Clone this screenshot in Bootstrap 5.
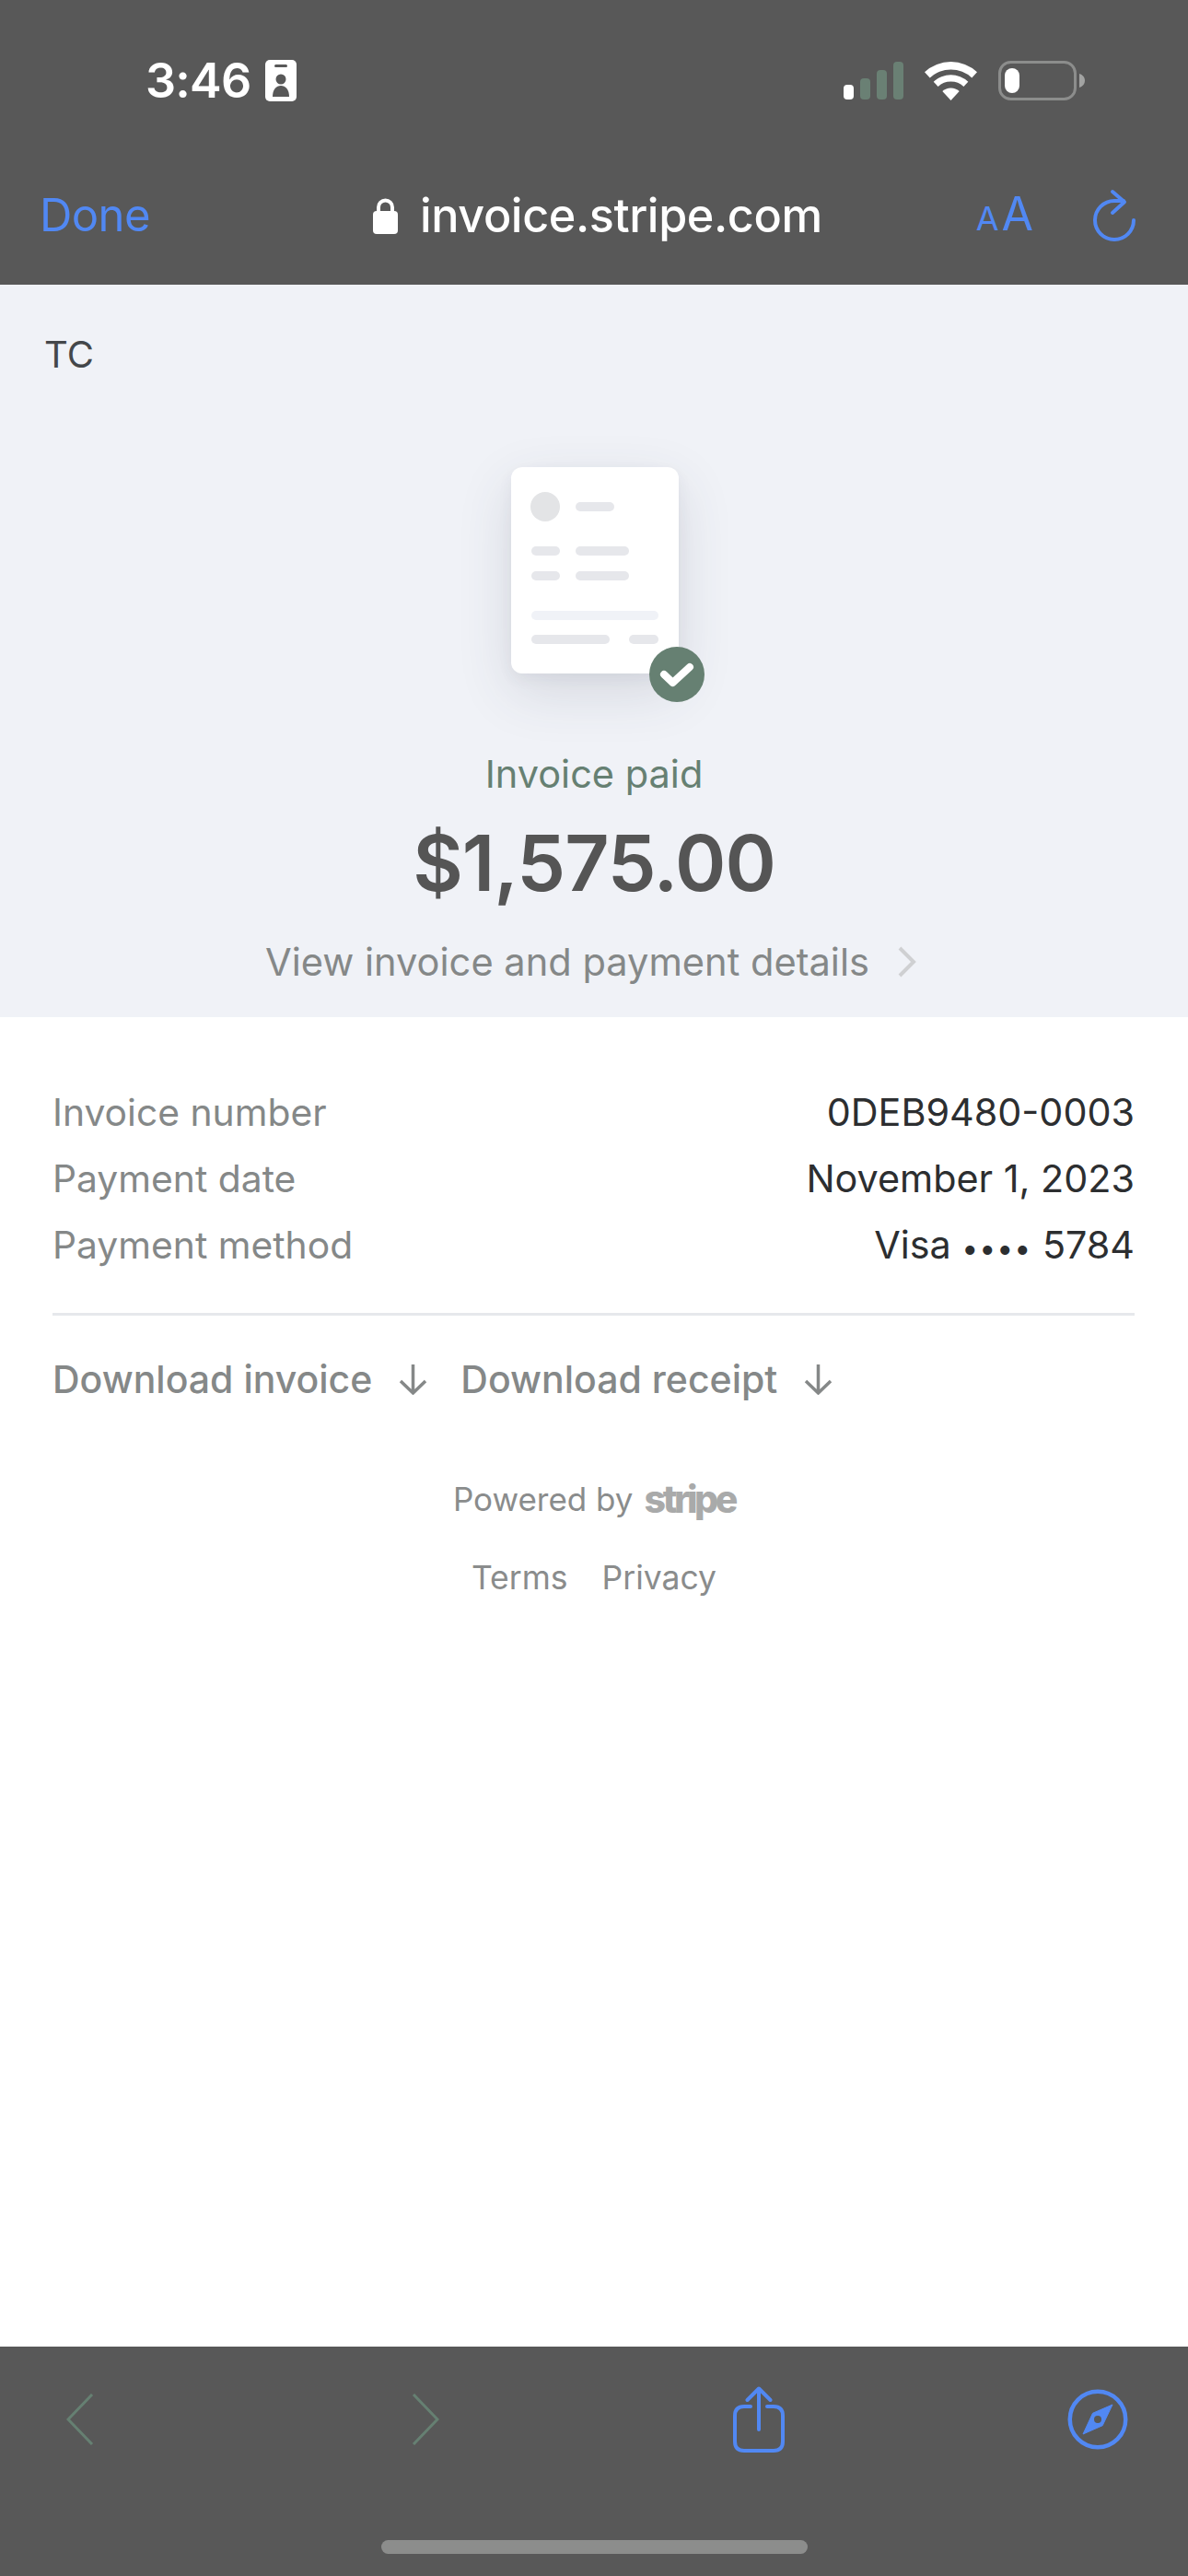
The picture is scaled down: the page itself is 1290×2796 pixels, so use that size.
<!DOCTYPE html>
<html lang="en">
<head>
    <meta charset="UTF-8">
    <title>Invoice paid</title>
    <link href="https://cdn.jsdelivr.net/npm/bootstrap@5.3.0/dist/css/bootstrap.min.css" rel="stylesheet">
    <style>
        html, body { height: 2796px; }
        body { font-family: Inter, "Liberation Sans", sans-serif; background: #fff; overflow: hidden; }
        .phone-page { height: 2796px; }
        .top-bar { height: 309px; background: #585858; color: #fff; }
        .status-row { box-sizing: content-box; height: 45px; padding: 65px 112px 0 158px; }
        .clock { font-size: 52px; line-height: 45px; font-weight: 600; letter-spacing: -.8px; }
        .status-icons { gap: 23px; }
        .url-row { height: 56px; margin-top: 96px; padding: 0 56px 0 43px; }
        .done-link { width: 362px; color: #5188f3; font-size: 49px; line-height: 56px; text-decoration: none; letter-spacing: -.6px; }
        .url-text { font-size: 50.3px; line-height: 56px; font-weight: 500; letter-spacing: -.4px; }
        .aa-mark { color: #5188f3; line-height: 56px; margin: 8px 64px 0 0; }
        .aa-small { font-size: 36px; margin-right: 3px; }
        .aa-big { font-size: 50px; }
        .hero-block { height: 795px; background: #f0f2f7; }
        .tc-label { padding: 52px 0 0 48px; font-size: 40px; line-height: 48px; color: #44474a; }
        .doc-wrap { width: 182px; height: 224px; margin: 98px auto 0; transform: translateX(1px); }
        .doc-sheet { width: 182px; height: 224px; background: #fff; border-radius: 12px; box-shadow: 0 20px 60px rgba(60, 66, 87, .14), 0 6px 16px rgba(60, 66, 87, .06); }
        .doc-check { right: -28px; bottom: -31px; width: 60px; height: 60px; }
        .paid-label { margin-top: 84px; color: #668072; font-size: 41.5px; line-height: 50px; }
        .amount-label { margin-top: 22px; color: #555; font-size: 84px; line-height: 100px; font-weight: 600; letter-spacing: -1px; }
        .details-row { margin-top: 32px; gap: 30px; padding-right: 6px; }
        .details-link { color: #858888; font-size: 41.6px; line-height: 50px; text-decoration: none; }
        .info-block { padding: 67px 58px 0 57px; font-size: 40.8px; line-height: 72px; }
        .info-key { color: #858888; }
        .info-val { color: #2c2e30; font-size: 41.3px; }
        .pin-dots { font-size: 32px; letter-spacing: 1px; }
        .rule-line { height: 3px; background: #e6e8ec; margin-top: 34px; }
        .dl-row { margin-top: 33px; line-height: 72px; font-size: 41px; font-weight: 500; gap: 35px; }
        .dl-link { color: #858888; text-decoration: none; gap: 28px; }
        .foot-block { margin-top: 68px; color: #8a8c8c; font-size: 35px; }
        .foot-brand { gap: 12px; }
        .stripe-word { color: #a9aaaa; font-size: 41px; line-height: 50px; font-weight: 800; letter-spacing: -3.4px; }
        .legal-row { margin-top: 34px; gap: 37px; line-height: 50px; font-size: 35.5px; }
        .legal-row a { color: #8a8c8c; text-decoration: none; }
        .bottom-bar { height: 249px; background: #585858; }
        .tool-row { height: 72px; margin-top: 43px; padding: 0 65px 0 72px; }
        .fwd-icon { margin-left: 345px; }
        .share-icon { margin-left: 319px; }
        .home-pill { width: 463px; height: 15px; background: #8c8d8c; border-radius: 8px; margin: 95px auto 0; }
    </style>
</head>
<body>
<div class="phone-page d-flex flex-column">

    <header class="top-bar">
        <div class="status-row d-flex align-items-center">
            <span class="clock">3:46</span>
            <svg class="ms-3" width="34" height="45" viewBox="0 0 34 45">
                <rect width="34" height="45" rx="5" fill="#fff"/>
                <rect x="10" y="5" width="14" height="3" rx="1.5" fill="#585858"/>
                <circle cx="17" cy="21" r="5.500" fill="#585858"/>
                <path d="M8 40c0-8 4-12 9-12s9 4 9 12z" fill="#585858"/>
            </svg>
            <div class="status-icons d-flex align-items-center ms-auto">
                <svg width="65" height="41" viewBox="0 0 65 41">
                    <rect x="0" y="25" width="11" height="16" rx="4" fill="#fff"/>
                    <rect x="18" y="18" width="11" height="23" rx="4" fill="#6a8074"/>
                    <rect x="36" y="9" width="11" height="32" rx="4" fill="#6a8074"/>
                    <rect x="54" y="0" width="11" height="41" rx="4" fill="#6a8074"/>
                </svg>
                <svg width="57" height="42" viewBox="0 0 57 42">
                    <path d="M0 11.200A42 42 0 0 1 57 11.200L51.300 17.400A33.500 33.500 0 0 0 5.700 17.400Z" fill="#fff"/>
                    <path d="M9.700 21.700A27.700 27.700 0 0 1 47.300 21.700L42.400 27A20.500 20.500 0 0 0 14.600 27Z" fill="#fff"/>
                    <path d="M19.300 32.100A13.500 13.500 0 0 1 37.700 32.100L28.500 42Z" fill="#fff"/>
                </svg>
                <svg width="94" height="43" viewBox="0 0 94 43">
                    <rect x="1.500" y="1.500" width="82" height="40" rx="12" fill="none" stroke="#8c8d8c" stroke-width="3"/>
                    <rect x="7" y="8" width="16" height="27" rx="8" fill="#fff"/>
                    <path d="M88 14c3.500 1 6 4 6 7.500s-2.500 6.500-6 7.500z" fill="#a2a3a2"/>
                </svg>
            </div>
        </div>
        <div class="url-row d-flex align-items-center">
            <a class="done-link" href="#">Done</a>
            <svg class="me-4" width="27" height="40" viewBox="0 0 27 40">
                <path d="M6 17v-6a7.500 7.500 0 0 1 15 0v6" fill="none" stroke="#fff" stroke-width="4"/>
                <rect x="0" y="15" width="27" height="25" rx="4" fill="#fff"/>
            </svg>
            <span class="url-text">invoice.stripe.com</span>
            <span class="aa-mark ms-auto"><span class="aa-small">A</span><span class="aa-big">A</span></span>
            <svg width="48" height="58" viewBox="0 0 48 58">
                <path d="M45 34A21 21 0 1 1 24 13H34" fill="none" stroke="#5188f3" stroke-width="4" stroke-linecap="round"/>
                <path d="M22 3L35 14.300 22 26" fill="none" stroke="#5188f3" stroke-width="4" stroke-linecap="round" stroke-linejoin="round"/>
            </svg>
        </div>
    </header>

    <section class="hero-block">
        <div class="tc-label">TC</div>
        <div class="doc-wrap position-relative">
            <div class="doc-sheet">
                <svg width="182" height="224" viewBox="0 0 182 224">
                    <circle cx="37" cy="43" r="16" fill="#e3e4e6"/>
                    <rect x="70" y="38" width="42" height="10" rx="5" fill="#e6e7eb"/>
                    <rect x="22" y="86" width="31" height="10" rx="5" fill="#e6e7eb"/>
                    <rect x="70" y="86" width="58" height="10" rx="5" fill="#e6e7eb"/>
                    <rect x="22" y="113" width="31" height="10" rx="5" fill="#e6e7eb"/>
                    <rect x="70" y="113" width="58" height="10" rx="5" fill="#e6e7eb"/>
                    <rect x="22" y="156" width="138" height="10" rx="5" fill="#f0f2f7"/>
                    <rect x="22" y="182" width="85" height="10" rx="5" fill="#e6e7eb"/>
                    <rect x="128" y="182" width="32" height="10" rx="5" fill="#e6e7eb"/>
                </svg>
            </div>
            <svg class="doc-check position-absolute" viewBox="0 0 60 60">
                <circle cx="30" cy="30" r="30" fill="#668072"/>
                <path d="M16 30l9.500 9L44 22" fill="none" stroke="#fff" stroke-width="8" stroke-linecap="round" stroke-linejoin="round"/>
            </svg>
        </div>
        <div class="paid-label text-center">Invoice paid</div>
        <div class="amount-label text-center">$1,575.00</div>
        <div class="details-row d-flex justify-content-center align-items-center">
            <a class="details-link" href="#">View invoice and payment details</a>
            <svg width="22" height="34" viewBox="0 0 22 34">
                <path d="M3 2l15 15-15 15" fill="none" stroke="#cfd0d2" stroke-width="4"/>
            </svg>
        </div>
    </section>

    <section class="info-block">
        <div class="d-flex justify-content-between"><span class="info-key">Invoice number</span><span class="info-val">0DEB9480-0003</span></div>
        <div class="d-flex justify-content-between"><span class="info-key">Payment date</span><span class="info-val">November 1, 2023</span></div>
        <div class="d-flex justify-content-between"><span class="info-key">Payment method</span><span class="info-val">Visa <span class="pin-dots">&bull;&bull;&bull;&bull;</span> 5784</span></div>
        <div class="rule-line"></div>
        <div class="dl-row d-flex">
            <a class="dl-link d-flex align-items-center" href="#">Download invoice
                <svg width="33" height="34" viewBox="0 0 33 34"><path d="M16.500 1v31M3 19l13.500 13L30 19" fill="none" stroke="#858888" stroke-width="3.500"/></svg>
            </a>
            <a class="dl-link d-flex align-items-center" href="#">Download receipt
                <svg width="33" height="34" viewBox="0 0 33 34"><path d="M16.500 1v31M3 19l13.500 13L30 19" fill="none" stroke="#858888" stroke-width="3.500"/></svg>
            </a>
        </div>
    </section>

    <footer class="foot-block text-center">
        <div class="foot-brand d-flex justify-content-center align-items-center">
            <span>Powered by</span>
            <span class="stripe-word">stripe</span>
        </div>
        <div class="legal-row d-flex justify-content-center">
            <a href="#">Terms</a>
            <a href="#">Privacy</a>
        </div>
    </footer>

    <div class="bottom-bar mt-auto">
        <div class="tool-row d-flex align-items-center">
            <svg width="30" height="56" viewBox="0 0 30 56"><path d="M28 1L2 28l26 27" fill="none" stroke="#668072" stroke-width="3"/></svg>
            <svg class="fwd-icon" width="30" height="56" viewBox="0 0 30 56"><path d="M2 1l26 27L2 55" fill="none" stroke="#668072" stroke-width="3"/></svg>
            <svg class="share-icon" width="56" height="72" viewBox="0 0 56 72">
                <path d="M19 22H12q-10 0-10 10v28q0 10 10 10h32q10 0 10-10V32q0-10-10-10h-7" fill="none" stroke="#5188f3" stroke-width="4" stroke-linecap="round"/>
                <path d="M28 47V3M15.500 15L28 2.500 40.500 15" fill="none" stroke="#5188f3" stroke-width="4" stroke-linecap="round" stroke-linejoin="round"/>
            </svg>
            <svg class="ms-auto" width="66" height="66" viewBox="0 0 66 66">
                <circle cx="33" cy="33" r="30.250" fill="none" stroke="#5188f3" stroke-width="4.500"/>
                <path d="M49 17L38.200 39.700 17 49 27.500 26.300Z" fill="#5188f3" stroke="#5188f3" stroke-width="1" stroke-linejoin="round"/>
                <circle cx="33" cy="33" r="4" fill="#585858"/>
            </svg>
        </div>
        <div class="home-pill"></div>
    </div>
</div>
<script src="https://cdn.jsdelivr.net/npm/bootstrap@5.3.0/dist/js/bootstrap.bundle.min.js"></script>
</body>
</html>
